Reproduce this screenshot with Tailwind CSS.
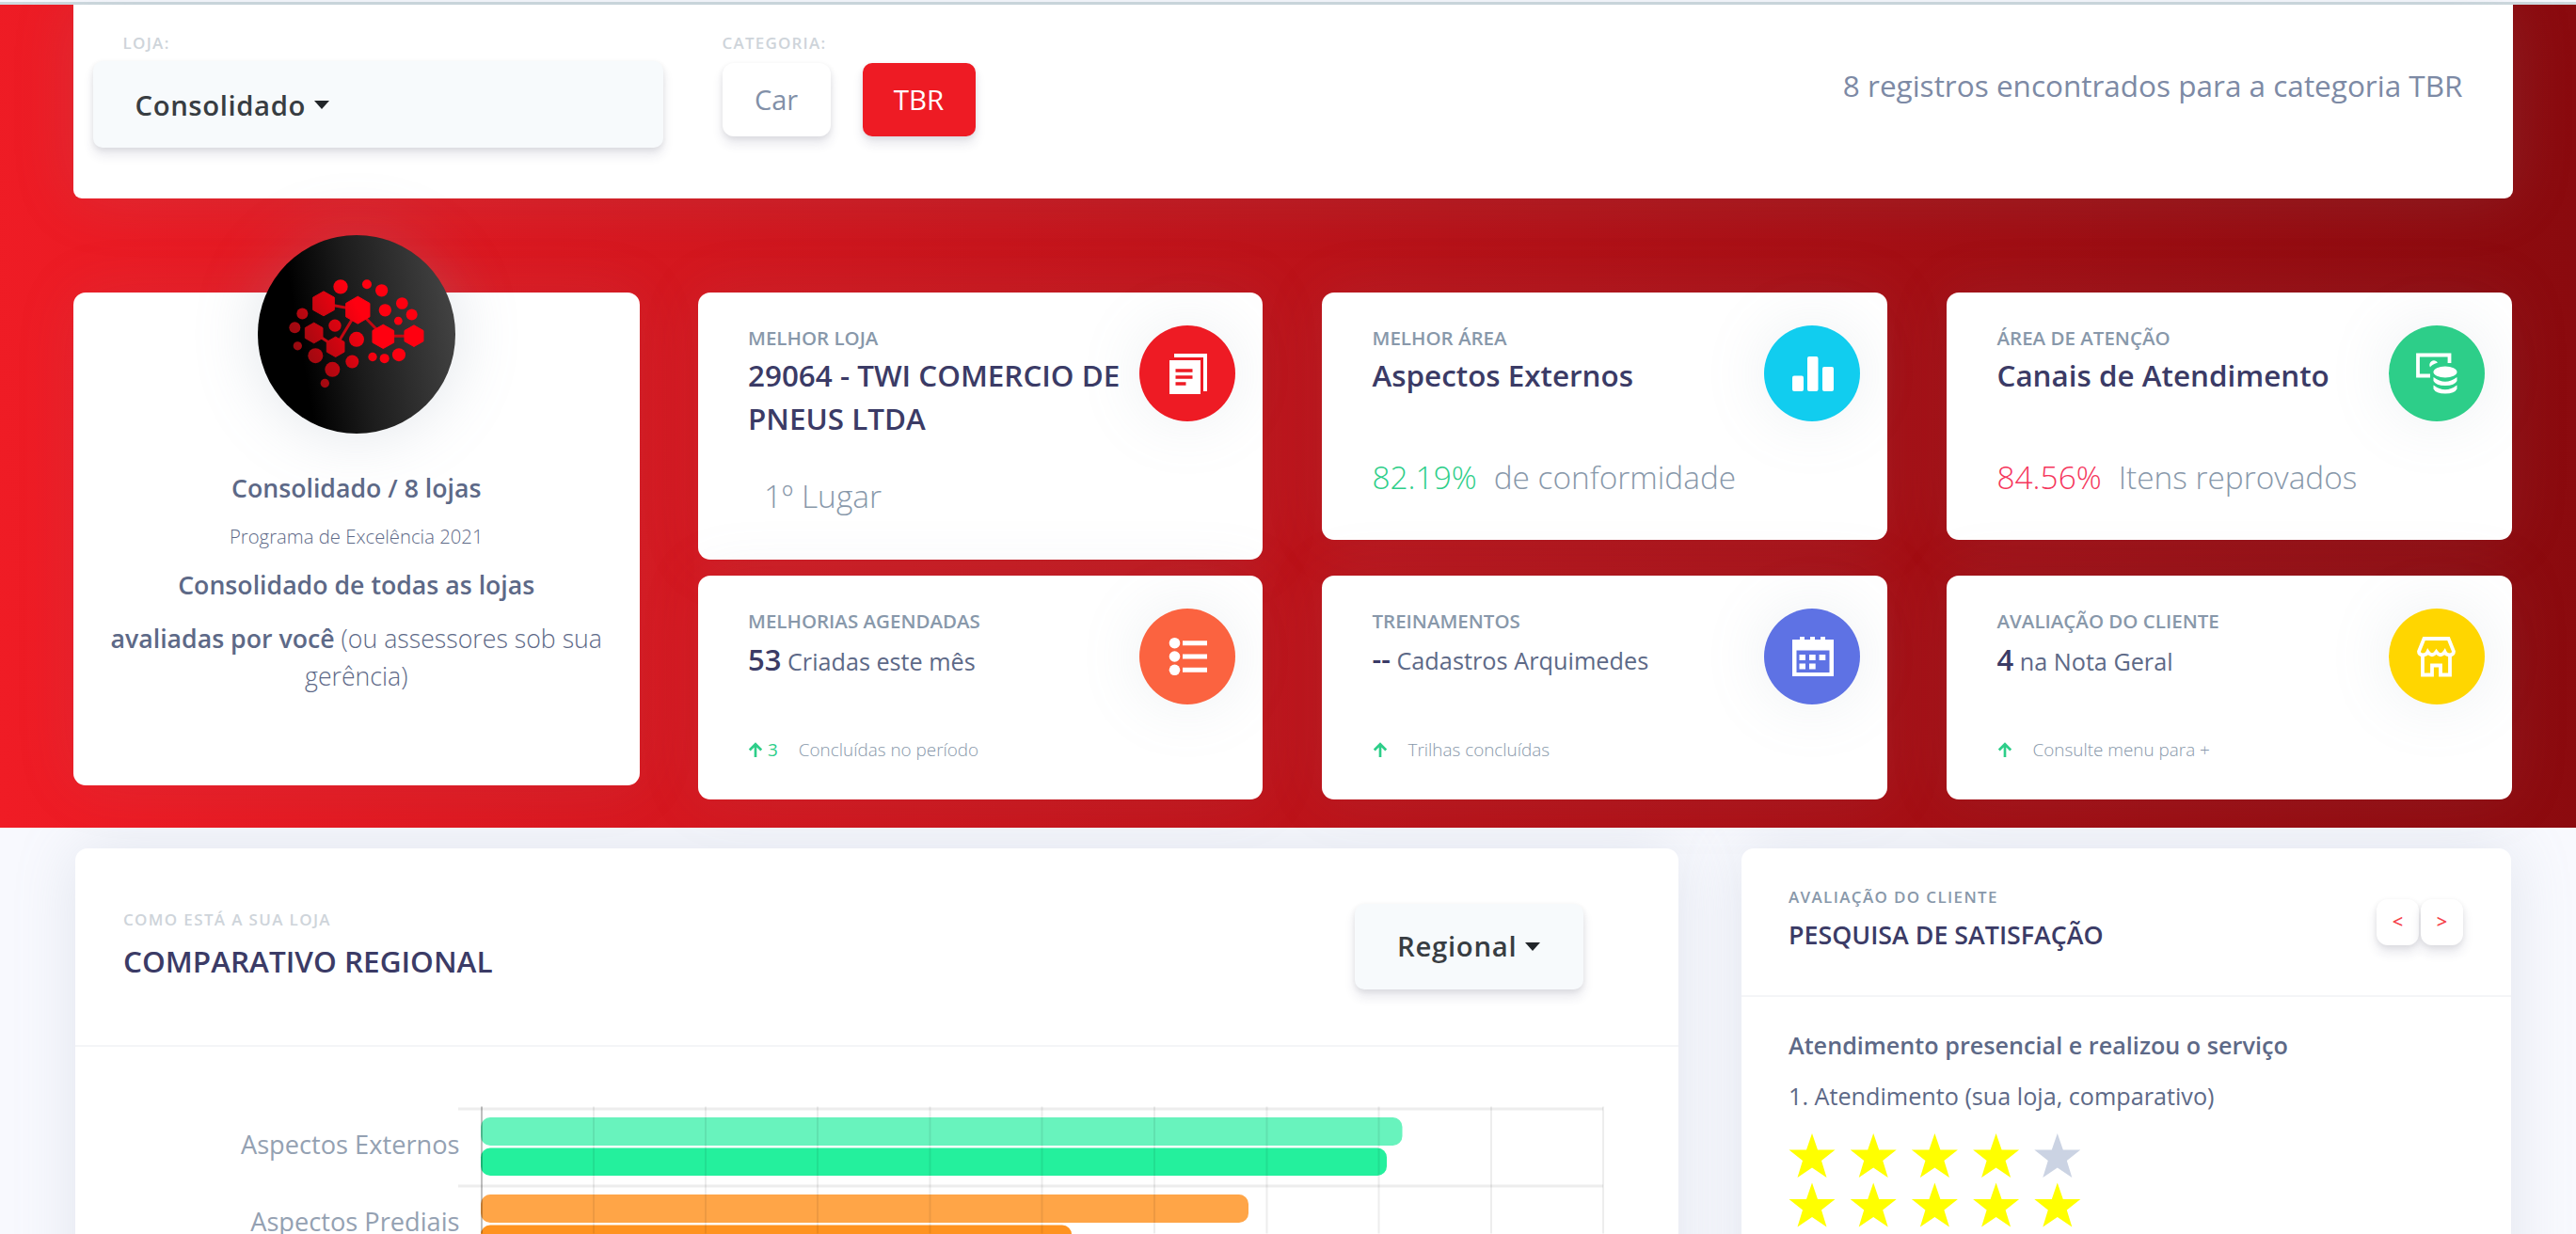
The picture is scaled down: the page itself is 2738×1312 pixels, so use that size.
<!DOCTYPE html>
<html lang="pt-BR">
<head>
<meta charset="utf-8">
<title>Programa de Excelência</title>
<script src="https://cdn.jsdelivr.net/npm/@tailwindcss/browser@4"></script>
</head>
<body class="flex h-[1312px] w-[2738px] flex-col overflow-hidden bg-[#f8f9fe] font-['Open_Sans',sans-serif] text-[#5d6987]">

<!-- Header with filters and indicators -->
<header class="mt-0.5 h-[878px] shrink-0 border-t-[3px] border-[#ced9de] bg-[linear-gradient(87deg,#f01c25_0%,#8a0a0e_100%)] pr-[67.5px] pl-[78px]">
  <section class="flex h-[205.5px] rounded-b-[9px] bg-white pl-[20.5px] pr-[53px] shadow-[0_0_67px_0_rgba(136,152,170,0.15)]">
    <div class="w-[606px] pt-[29px]">
      <div class="pl-[32px] text-[17px] leading-6 font-semibold tracking-[1.3px] text-[#ced4da]">LOJA:</div>
      <button class="mt-[7px] flex h-[92px] w-full items-center gap-[9px] rounded-[10px] bg-[#f7fafc] pt-[3px] pl-[45px] text-[29.3px] font-semibold tracking-[0.6px] text-[#383d42] shadow-[0_8px_12px_rgba(50,50,93,0.11),0_2px_6px_rgba(0,0,0,0.08)]">Consolidado
        <span class="mb-0.5 h-0 w-0 border-x-[8px] border-t-[9px] border-x-transparent border-t-[#212529]"></span>
      </button>
    </div>
    <div class="ml-[63px] pt-[29px]">
      <div class="text-[17px] leading-6 font-semibold tracking-[1.2px] text-[#ced4da]">CATEGORIA:</div>
      <div class="mt-[9px] flex gap-[34px]">
        <button class="h-[78px] w-[115px] rounded-[12px] bg-white text-[29px] text-[#8290a8] shadow-[0_8px_12px_rgba(50,50,93,0.11),0_2px_6px_rgba(0,0,0,0.08)]">Car</button>
        <button class="h-[78px] w-[120px] rounded-[10px] bg-[#ee1b24] text-[29.5px] text-white shadow-[0_8px_12px_rgba(50,50,93,0.11),0_2px_6px_rgba(0,0,0,0.08)]">TBR</button>
      </div>
    </div>
    <div class="ml-auto pt-[63px] text-[31.5px] leading-[46px] text-[#7d8aa5]">8 registros encontrados para a categoria TBR</div>
  </section>

  <section class="mt-[100.5px] grid grid-cols-[601.5px_600px_601.5px_601.5px] grid-rows-[301px_238px] items-start gap-x-[62.5px]">
    <!-- Store summary -->
    <article class="relative row-span-2 h-[524px] rounded-[13px] bg-white px-5 pt-[187.5px] text-center text-[26.7px] leading-10 shadow-[0_0_67px_0_rgba(136,152,170,0.1)]">
      <div class="absolute top-[-61.5px] left-[196px] h-[211px] w-[210px] rounded-full bg-[linear-gradient(80deg,#000_25%,#1c1c1c_50%,#484848_100%)] shadow-[0_0_67px_0_rgba(136,152,170,0.25)]">
        <svg class="h-full w-full" viewBox="0 0 210 211">
          <defs><linearGradient id="node" gradientUnits="userSpaceOnUse" x1="70" y1="270" x2="280" y2="160"><stop offset="0" stop-color="#960a10"/><stop offset="1" stop-color="#ff0010"/></linearGradient></defs>
          <g transform="translate(16 29.5) scale(.3333)" fill="url(#node)">
            <path d="M162 130L271 150M271 150L200 268M271 150L352 234M352 233H450M131 223L200 268" stroke="#c30812" stroke-width="9" fill="none"/>
            <path d="M162 91l34 19v40l-34 19-34-19v-40zM271 107l38 22v43l-38 22-38-22v-43zM352 197l34 19v38l-34 19-34-19v-38zM450 199l30 17v34l-30 17-30-17v-34zM131 191l28 16v33l-28 16-28-16v-33zM200 236l28 16v32l-28 16-28-16v-32z" stroke="url(#node)" stroke-width="3" stroke-linejoin="round"/>
            <circle cx="216" cy="76" r="23"/><circle cx="300" cy="68" r="15"/><circle cx="347" cy="88" r="20"/><circle cx="358" cy="151" r="20"/><circle cx="412" cy="129" r="19"/><circle cx="443" cy="165" r="18"/><circle cx="400" cy="185" r="13"/><circle cx="94" cy="162" r="18"/><circle cx="70" cy="206" r="18"/><circle cx="79" cy="265" r="14"/><circle cx="198" cy="200" r="20"/><circle cx="267" cy="244" r="24"/><circle cx="136" cy="296" r="24"/><circle cx="253" cy="315" r="21"/><circle cx="190" cy="340" r="24"/><circle cx="166" cy="384" r="14"/><circle cx="318" cy="300" r="14"/><circle cx="356" cy="305" r="15"/><circle cx="402" cy="293" r="21"/>
          </g>
        </svg>
      </div>
      <h3 class="font-semibold">Consolidado / 8 lojas</h3>
      <p class="mt-[16.5px] text-[20.3px] leading-[30px] font-light">Programa de Excelência 2021</p>
      <h4 class="mt-[17px] font-semibold">Consolidado de todas as lojas</h4>
      <p class="mt-[17px] font-light"><b class="font-semibold">avaliadas por você</b> (ou assessores sob sua gerência)</p>
    </article>

    <article class="h-[284px] rounded-[13px] bg-white pt-[35px] pr-[29.5px] pl-[53px] shadow-[0_0_67px_0_rgba(136,152,170,0.1)]">
      <div class="flex justify-between">
        <div class="-mt-0.5 w-[400px]">
          <h5 class="text-[20.5px] leading-[30px] font-semibold text-[#8898aa]">MELHOR LOJA</h5>
          <p class="mt-0.5 text-[31.4px] leading-[46.2px] font-semibold text-[#3b3b66]">29064 - TWI COMERCIO DE PNEUS LTDA</p>
        </div>
        <div class="h-[101.5px] w-[101.5px] shrink-0 rounded-full bg-[#ee1b24] shadow-[0_0_67px_0_rgba(136,152,170,0.15)]">
          <svg viewBox="0 0 101.5 101.5"><path d="M37 32H70V70" fill="none" stroke="#fff" stroke-width="4"/><rect x="32" y="37" width="33" height="36" fill="#fff"/><path d="M38.500 48H56.500M38.500 55H56.500M38.500 62H49.500" stroke="#ee1b24" stroke-width="3.500"/></svg>
        </div>
      </div>
      <p class="mt-[36px] pl-[17px] text-[33.5px] leading-[46px] font-light text-[#8898aa]">1º Lugar</p>
    </article>

    <article class="h-[263px] rounded-[13px] bg-white pt-[35px] pr-[29.5px] pl-[54px] shadow-[0_0_67px_0_rgba(136,152,170,0.1)]">
      <div class="flex justify-between">
        <div class="-mt-0.5">
          <h5 class="text-[20.5px] leading-[30px] font-semibold text-[#8898aa]">MELHOR ÁREA</h5>
          <p class="mt-0.5 text-[31.4px] leading-[46.2px] font-semibold text-[#3b3b66]">Aspectos Externos</p>
        </div>
        <div class="h-[101.5px] w-[101.5px] shrink-0 rounded-full bg-[#11cdef] shadow-[0_0_67px_0_rgba(136,152,170,0.15)]">
          <svg viewBox="0 0 101.5 101.5" fill="#fff"><rect x="30" y="53.500" width="12" height="16.500" rx="2"/><rect x="46" y="33" width="11.500" height="37" rx="2"/><rect x="62" y="44" width="12" height="26" rx="2"/></svg>
        </div>
      </div>
      <p class="mt-[36.5px] flex gap-[18px] text-[33.4px] leading-[46px] font-light text-[#8898aa]"><span class="text-[#2dce89]">82.19%</span><span>de conformidade</span></p>
    </article>

    <article class="h-[263px] rounded-[13px] bg-white pt-[35px] pr-[29.5px] pl-[54px] shadow-[0_0_67px_0_rgba(136,152,170,0.1)]">
      <div class="flex justify-between">
        <div class="-mt-0.5">
          <h5 class="text-[20.5px] leading-[30px] font-semibold text-[#8898aa]">ÁREA DE ATENÇÃO</h5>
          <p class="mt-0.5 text-[31.4px] leading-[46.2px] font-semibold text-[#3b3b66]">Canais de Atendimento</p>
        </div>
        <div class="h-[101.5px] w-[101.5px] shrink-0 rounded-full bg-[#2dce89] shadow-[0_0_67px_0_rgba(136,152,170,0.15)]">
          <svg viewBox="0 0 101.5 101.5"><path d="M64.500 40V31.500H31V53.500H44" fill="none" stroke="#fff" stroke-width="3.800"/><path d="M52 39.500A4 4 0 1 0 44 44.500Q45 42 52 39.500" fill="#fff"/><ellipse cx="60" cy="49.500" rx="12.500" ry="6" fill="#fff"/><path d="M47.500 55Q60 64.500 72.500 55V59Q70 64 60 64T47.500 59ZM47.500 63.500Q60 73 72.500 63.500V67.500Q70 72.500 60 72.500T47.500 67.500Z" fill="#fff"/></svg>
        </div>
      </div>
      <p class="mt-[36.5px] flex gap-[18px] text-[33.4px] leading-[46px] font-light text-[#8898aa]"><span class="text-[#f5365c]">84.56%</span><span>Itens reprovados</span></p>
    </article>

    <article class="h-[237.5px] rounded-[13px] bg-white pt-[35px] pr-[29.5px] pl-[53px] shadow-[0_0_67px_0_rgba(136,152,170,0.1)]">
      <div class="flex justify-between">
        <div class="-mt-0.5">
          <h5 class="text-[20.5px] leading-[30px] font-semibold text-[#8898aa]">MELHORIAS AGENDADAS</h5>
          <p class="mt-[3px] text-[25.2px] leading-[46.2px]"><b class="text-[31px] font-semibold text-[#3b3b66]">53</b> Criadas este mês</p>
        </div>
        <div class="h-[101.5px] w-[101.5px] shrink-0 rounded-full bg-[#fb6340] shadow-[0_0_67px_0_rgba(136,152,170,0.15)]">
          <svg viewBox="0 0 101.5 101.5" fill="#fff"><circle cx="37.500" cy="36.700" r="5.800"/><circle cx="37.500" cy="51" r="5.800"/><circle cx="37.500" cy="65.300" r="5.800"/><path d="M46 34.200H72V39.200H46ZM46 48.500H72V53.500H46ZM46 62.800H72V67.800H46Z"/></svg>
        </div>
      </div>
      <p class="mt-[34px] flex items-center text-[18.9px] leading-7 font-light text-[#8898aa]">
        <svg class="h-[16px] w-[16px]" viewBox="0 0 17 18" fill="none" stroke="#2dce89" stroke-width="3"><path d="M8.500 18V3M1.500 9.500L8.500 2.500L15.500 9.500"/></svg>
        <span class="ml-[5px] font-normal text-[#2dce89]">3</span><span class="ml-[22px]">Concluídas no período</span></p>
    </article>

    <article class="h-[237.5px] rounded-[13px] bg-white pt-[35px] pr-[29.5px] pl-[54px] shadow-[0_0_67px_0_rgba(136,152,170,0.1)]">
      <div class="flex justify-between">
        <div class="-mt-0.5">
          <h5 class="text-[20.5px] leading-[30px] font-semibold text-[#8898aa]">TREINAMENTOS</h5>
          <p class="mt-[3px] text-[25.3px] leading-[46.2px]"><b class="text-[30px] font-semibold text-[#3b3b66]">--</b> Cadastros Arquimedes</p>
        </div>
        <div class="h-[101.5px] w-[101.5px] shrink-0 rounded-full bg-[#5e72e4] shadow-[0_0_67px_0_rgba(136,152,170,0.15)]">
          <svg viewBox="0 0 101.5 101.5" fill="#fff"><path fill-rule="evenodd" d="M30 33H38V30H43V33H49V30H54V33H60V30H65V33H74V72H30ZM34.500 44.500V68H69.500V44.500Z"/><path d="M37.500 49H44V55H37.500ZM48 49H54.700V55H48ZM58.600 49H65.300V55H58.600ZM37.500 58.500H44V64.500H37.500ZM48 58.500H54.700V64.500H48Z"/></svg>
        </div>
      </div>
      <p class="mt-[34px] flex items-center text-[18.9px] leading-7 font-light text-[#8898aa]">
        <svg class="h-[16px] w-[16px]" viewBox="0 0 17 18" fill="none" stroke="#2dce89" stroke-width="3"><path d="M8.500 18V3M1.500 9.500L8.500 2.500L15.500 9.500"/></svg>
        <span class="ml-[22px]">Trilhas concluídas</span></p>
    </article>

    <article class="h-[237.5px] rounded-[13px] bg-white pt-[35px] pr-[29.5px] pl-[54px] shadow-[0_0_67px_0_rgba(136,152,170,0.1)]">
      <div class="flex justify-between">
        <div class="-mt-0.5">
          <h5 class="text-[20.5px] leading-[30px] font-semibold text-[#8898aa]">AVALIAÇÃO DO CLIENTE</h5>
          <p class="mt-[3px] text-[25.2px] leading-[46.2px]"><b class="text-[31px] font-semibold text-[#3b3b66]">4</b> na Nota Geral</p>
        </div>
        <div class="h-[101.5px] w-[101.5px] shrink-0 rounded-full bg-[#ffd600] shadow-[0_0_67px_0_rgba(136,152,170,0.15)]">
          <svg viewBox="0 0 101.5 101.5" fill="none" stroke="#fff" stroke-width="3.800"><path d="M37.500 32H63.500L69 45.500Q69 49 65 49.500Q61 49.500 59.500 46Q55 52.500 50.500 46Q46 52.500 41.500 46Q40 49.500 36 49.500Q32 49 32 45.500Z"/><path d="M36 49V70.500H46V60.500H55V70.500H65V49"/></svg>
        </div>
      </div>
      <p class="mt-[34px] flex items-center text-[18.9px] leading-7 font-light text-[#8898aa]">
        <svg class="h-[16px] w-[16px]" viewBox="0 0 17 18" fill="none" stroke="#2dce89" stroke-width="3"><path d="M8.500 18V3M1.500 9.500L8.500 2.500L15.500 9.500"/></svg>
        <span class="ml-[22px]">Consulte menu para +</span></p>
    </article>
  </section>
</header>

<!-- Lower panels -->
<main class="flex min-h-0 flex-1 gap-[67px] overflow-hidden pt-[22px] pl-[80px]">
  <section class="h-[600px] w-[1704px] shrink-0 rounded-[13px] bg-white shadow-[0_0_67px_0_rgba(136,152,170,0.2)]">
    <div class="flex h-[211px] justify-between border-b-[2.5px] border-[#f4f5f7] pr-[101px] pl-[51px]">
      <div class="pt-[63.5px]">
        <h6 class="text-[17px] leading-6 font-semibold tracking-[1.35px] text-[#ced4da]">COMO ESTÁ A SUA LOJA</h6>
        <h2 class="mt-[9px] text-[31.5px] leading-[46px] font-semibold text-[#3b3b66]">COMPARATIVO REGIONAL</h2>
      </div>
      <button class="mt-[58.5px] flex h-[91px] w-[243px] items-center gap-[9px] rounded-[10px] bg-[#f7fafc] pt-0.5 pl-[45px] text-[29.3px] font-semibold tracking-[0.7px] text-[#383d42] shadow-[0_8px_12px_rgba(50,50,93,0.11),0_2px_6px_rgba(0,0,0,0.08)]">Regional
        <span class="mb-0.5 h-0 w-0 border-x-[8px] border-t-[9px] border-x-transparent border-t-[#212529]"></span>
      </button>
    </div>
    <svg class="h-[199px] w-[1704px]" viewBox="80 1113.500 1704 199">
      <g font-family="Open Sans" font-size="27.200" fill="#94a1b2" text-anchor="end">
        <text x="488.500" y="1227">Aspectos Externos</text>
        <text x="488.500" y="1309">Aspectos Prediais</text>
      </g>
      <rect x="511" y="1188.500" width="979.500" height="30" rx="10" fill="#68f3bd"/>
      <rect x="511" y="1221" width="963" height="29.500" rx="10" fill="#24f09d"/>
      <rect x="511" y="1270.500" width="816" height="30" rx="10" fill="#ffa547"/>
      <rect x="511" y="1303" width="628" height="30" rx="10" fill="#ff9320"/>
      <g stroke="#000" stroke-opacity=".07" stroke-width="2">
        <path d="M631 1177V1312M750 1177V1312M869 1177V1312M988.500 1177V1312M1107.500 1177V1312M1227 1177V1312M1346.500 1177V1312M1465.500 1177V1312M1585 1177V1312M1704 1177V1312"/>
        <path d="M487 1179.500H1704M487 1261.500H1704" stroke-width="2.800" stroke-opacity=".07"/>
        <path d="M512 1177V1312" stroke-opacity=".25"/>
      </g>
    </svg>
  </section>

  <section class="h-[600px] w-[818px] shrink-0 rounded-[13px] bg-white shadow-[0_0_67px_0_rgba(136,152,170,0.2)]">
    <div class="flex h-[158px] justify-between border-b-[2.5px] border-[#f4f5f7] pr-[51px] pl-[50px]">
      <div class="pt-[40px]">
        <h6 class="text-[17px] leading-6 font-semibold tracking-[1.35px] text-[#8898aa]">AVALIAÇÃO DO CLIENTE</h6>
        <h2 class="mt-[8px] text-[26.8px] leading-10 font-semibold text-[#3b3b66]">PESQUISA DE SATISFAÇÃO</h2>
      </div>
      <div class="flex gap-0.5 pt-[53.5px]">
        <button class="h-[49px] w-[45px] rounded-[12px] bg-white pb-px text-[20px] font-semibold text-[#f5414a] shadow-[0_8px_12px_rgba(50,50,93,0.11),0_2px_6px_rgba(0,0,0,0.08)]">&lt;</button>
        <button class="h-[49px] w-[45px] rounded-[12px] bg-white pb-px text-[20px] font-semibold text-[#f5414a] shadow-[0_8px_12px_rgba(50,50,93,0.11),0_2px_6px_rgba(0,0,0,0.08)]">&gt;</button>
      </div>
    </div>
    <div class="pt-[31.5px] pl-[50px] text-[25.2px] leading-[38px]">
      <p class="font-semibold">Atendimento presencial e realizou o serviço</p>
      <p class="mt-[16.5px]">1. Atendimento (sua loja, comparativo)</p>
      <svg class="mt-[21px] h-[100px] w-[312px]" viewBox="0 0 312 100" fill="#ff0">
        <defs><path id="star" d="M25 0L31 17.500H49.500L35 29L40.500 47L25 36.500L9.500 47L15 29L.5 17.500H19Z"/></defs>
        <use href="#star"/><use href="#star" x="65.200"/><use href="#star" x="130.400"/><use href="#star" x="195.600"/><use href="#star" x="260.800" fill="#cbd3e3"/>
        <use href="#star" y="52.500"/><use href="#star" x="65.200" y="52.500"/><use href="#star" x="130.400" y="52.500"/><use href="#star" x="195.600" y="52.500"/><use href="#star" x="260.800" y="52.500"/>
      </svg>
    </div>
  </section>
</main>
</body>
</html>
